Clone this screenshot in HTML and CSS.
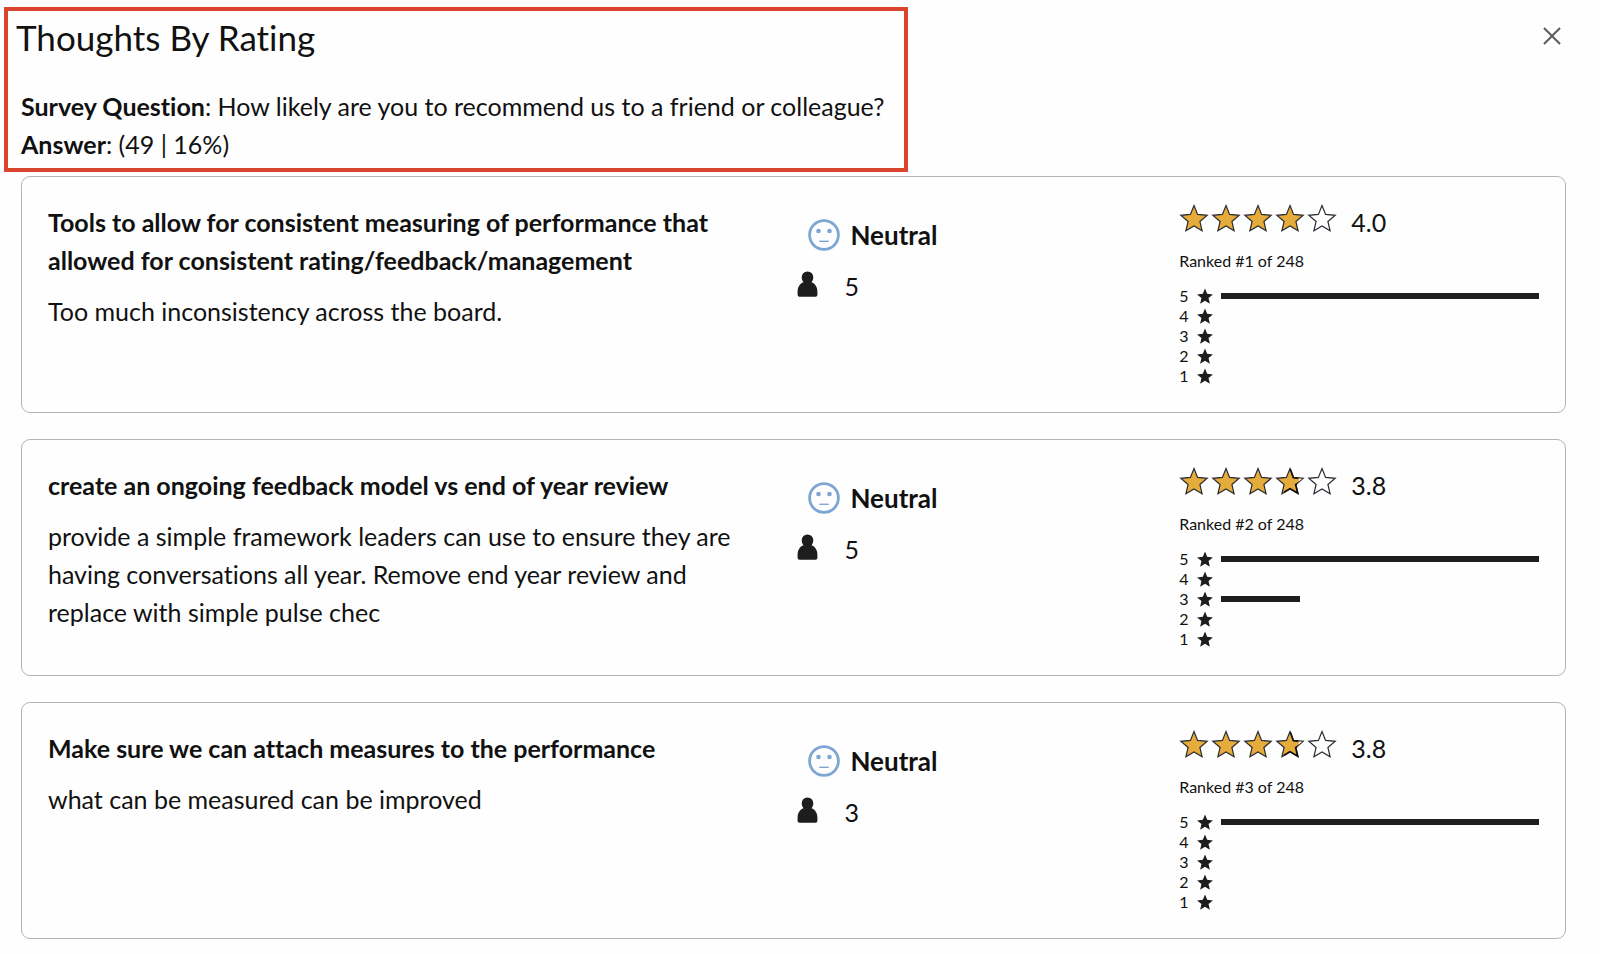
FILE: index.html
```html
<!DOCTYPE html>
<html lang="en">
<head>
<meta charset="utf-8">
<title>Thoughts By Rating</title>
<link rel="stylesheet" href="styles.css">
</head>
<body>
<svg class="sprite" aria-hidden="true">
  <symbol id="star" viewBox="0 0 30 30"><path d="M15 2.6 18.6 11.4 28.2 12.3 20.9 18.5 23.1 27.8 15 23 6.9 27.8 9.1 18.5 1.8 12.3 11.4 11.4Z"/></symbol>
  <symbol id="star-part" viewBox="0 0 30 30"><path d="M15 2.6 18.6 11.4 28.2 12.3 20.9 18.5 23.1 27.8 15 23 6.9 27.8 9.1 18.5 1.8 12.3 11.4 11.4Z"/><path class="edge" d="M15.300 3.400 18.400 11.700 23 12.200M22 17.600 20.600 18.600 22.600 27 15 22.600 9 26.200"/><path class="gap" d="M24.400 12.600 27 12.800 23.400 15.800Z"/></symbol>
  <symbol id="face" viewBox="0 0 32 32"><circle cx="16" cy="16" r="14.4" fill="none" stroke="#7fa6d2" stroke-width="2.8"/><circle cx="10.5" cy="12" r="2.3" fill="#7fa6d2"/><circle cx="21.5" cy="12" r="2.3" fill="#7fa6d2"/><path d="M11.3 22.3H20.7" stroke="#7fa6d2" stroke-width="1.4"/></symbol>
  <symbol id="person" viewBox="0 0 20 26"><path d="M10 .4a5.8 5.8 0 0 0-5.8 5.8c0 2 .8 3.7 1.8 5C2.400 12.400.1 16 .1 20.500V24Q.1 25.700 2 25.700H18Q19.900 25.700 19.900 24V20.500C19.900 16 17.600 12.400 14 11.200c1-1.300 1.800-3 1.800-5A5.800 5.800 0 0 0 10 .4Z" fill="#1d1d1d"/></symbol>
</svg>

<header class="header">
  <div class="summary">
    <h1 class="title">Thoughts By Rating</h1>
    <p class="line"><strong>Survey Question</strong>: How likely are you to recommend us to a friend or colleague?</p>
    <p class="line"><strong>Answer</strong>: (49 | 16%)</p>
  </div>
  <button class="close" type="button" aria-label="Close">
    <svg viewBox="0 0 18 18"><path d="M1 1 17 17M17 1 1 17"/></svg>
  </button>
</header>

<main class="cards">
  <article class="card">
    <div class="thought">
      <h2>Tools to allow for consistent measuring of performance that allowed for consistent rating/feedback/management</h2>
      <p>Too much inconsistency across the board.</p>
    </div>
    <div class="mood">
      <div class="sentiment"><svg><use href="#face"/></svg>Neutral</div>
      <div class="people"><svg><use href="#person"/></svg>5</div>
    </div>
    <div class="stats">
      <div class="rating"><svg class="on"><use href="#star"/></svg><svg class="on"><use href="#star"/></svg><svg class="on"><use href="#star"/></svg><svg class="on"><use href="#star"/></svg><svg><use href="#star"/></svg><span class="score">4.0</span></div>
      <p class="rank">Ranked #1 of 248</p>
      <ol class="bars">
        <li>5<svg><use href="#star"/></svg><span class="track"><span class="bar" style="width:100%"></span></span></li>
        <li>4<svg><use href="#star"/></svg></li>
        <li>3<svg><use href="#star"/></svg></li>
        <li>2<svg><use href="#star"/></svg></li>
        <li>1<svg><use href="#star"/></svg></li>
      </ol>
    </div>
  </article>

  <article class="card">
    <div class="thought">
      <h2>create an ongoing feedback model vs end of year review</h2>
      <p>provide a simple framework leaders can use to ensure they are having conversations all year. Remove end year review and replace with simple pulse chec</p>
    </div>
    <div class="mood">
      <div class="sentiment"><svg><use href="#face"/></svg>Neutral</div>
      <div class="people"><svg><use href="#person"/></svg>5</div>
    </div>
    <div class="stats">
      <div class="rating"><svg class="on"><use href="#star"/></svg><svg class="on"><use href="#star"/></svg><svg class="on"><use href="#star"/></svg><svg class="on"><use href="#star-part"/></svg><svg><use href="#star"/></svg><span class="score">3.8</span></div>
      <p class="rank">Ranked #2 of 248</p>
      <ol class="bars">
        <li>5<svg><use href="#star"/></svg><span class="track"><span class="bar" style="width:100%"></span></span></li>
        <li>4<svg><use href="#star"/></svg></li>
        <li>3<svg><use href="#star"/></svg><span class="track"><span class="bar" style="width:25%"></span></span></li>
        <li>2<svg><use href="#star"/></svg></li>
        <li>1<svg><use href="#star"/></svg></li>
      </ol>
    </div>
  </article>

  <article class="card">
    <div class="thought">
      <h2>Make sure we can attach measures to the performance</h2>
      <p>what can be measured can be improved</p>
    </div>
    <div class="mood">
      <div class="sentiment"><svg><use href="#face"/></svg>Neutral</div>
      <div class="people"><svg><use href="#person"/></svg>3</div>
    </div>
    <div class="stats">
      <div class="rating"><svg class="on"><use href="#star"/></svg><svg class="on"><use href="#star"/></svg><svg class="on"><use href="#star"/></svg><svg class="on"><use href="#star-part"/></svg><svg><use href="#star"/></svg><span class="score">3.8</span></div>
      <p class="rank">Ranked #3 of 248</p>
      <ol class="bars">
        <li>5<svg><use href="#star"/></svg><span class="track"><span class="bar" style="width:100%"></span></span></li>
        <li>4<svg><use href="#star"/></svg></li>
        <li>3<svg><use href="#star"/></svg></li>
        <li>2<svg><use href="#star"/></svg></li>
        <li>1<svg><use href="#star"/></svg></li>
      </ol>
    </div>
  </article>
</main>
</body>
</html>
```

FILE: styles.css
```css
* { box-sizing: border-box; }

body {
  margin: 0;
  padding: 7px 34px 15px 4px;
  background: #fefefe;
  color: #111;
  font: 25px/38px Lato, "Open Sans", sans-serif;
  font-variant-ligatures: none;
}

h1, h2, p, ol { margin: 0; padding: 0; }
svg { display: block; flex: none; }
.sprite { display: none; }

.header {
  display: flex;
  justify-content: space-between;
  align-items: flex-start;
}

.summary {
  border: 4px solid #d9452e;
  padding: 0 20px 5px 8px;
}

.title {
  margin-bottom: 24px;
  font-size: 35px;
  line-height: 52px;
  font-weight: 400;
}

.line { padding-left: 5px; }

.close {
  display: flex;
  margin: 12px -3px 0 0;
  padding: 8px;
  border: 0;
  background: none;
}
.close svg {
  width: 18px;
  height: 18px;
  fill: none;
  stroke: #5c5c5c;
  stroke-width: 2;
}

.cards {
  display: flex;
  flex-direction: column;
  gap: 26px;
  margin-top: 4px;
  padding-left: 17px;
}

.card {
  display: grid;
  grid-template-columns: 750fr 382fr 360fr;
  padding: 26px;
  border: 1px solid #b4b4b4;
  border-radius: 9px;
}

.thought {
  display: flex;
  flex-direction: column;
  gap: 13px;
  padding-right: 50px;
}
.thought h2 { font-size: 25px; font-weight: 700; }

.mood {
  display: flex;
  flex-direction: column;
  gap: 13px;
  padding-top: 13px;
}
.sentiment {
  display: flex;
  align-items: center;
  gap: 10px;
  padding-left: 11px;
  font-size: 26px;
  font-weight: 700;
}
.sentiment svg { width: 32px; height: 32px; }
.people {
  display: flex;
  align-items: center;
  gap: 26px;
}
.people svg { width: 21px; height: 26px; margin-bottom: 4px; }

.rating {
  display: flex;
  align-items: center;
  gap: 2px;
}
.rating svg {
  width: 30px;
  height: 30px;
  margin-bottom: 8px;
  fill: #fff;
  stroke: #2b2b33;
  stroke-width: 1.2;
}
.rating .on { fill: #e5ac3c; }
.edge { fill: none; stroke: #111; stroke-width: 1.6; }
.gap { fill: #fff; stroke: none; }
.score { margin-left: 12px; }

.rank {
  margin: 8px 0 13px;
  font-size: 16px;
  line-height: 24px;
}

.bars {
  list-style: none;
  font-size: 16px;
  line-height: 20px;
}
.bars li {
  display: flex;
  align-items: center;
  gap: 7px;
}
.bars svg { width: 18px; height: 18px; fill: #1d1d1d; }
.track { flex: 1; }
.bar { display: block; height: 6px; background: #1d1f1e; }
```
